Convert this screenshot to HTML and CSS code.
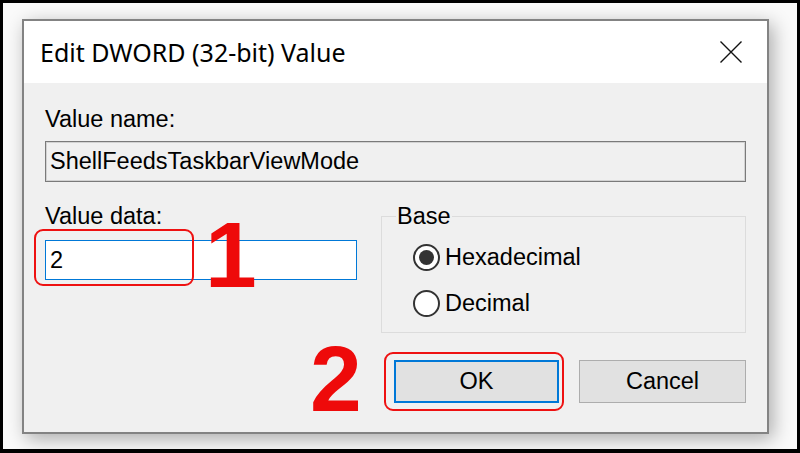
FILE: index.html
```html
<!DOCTYPE html>
<html lang="en">
  <head>
    <meta charset="UTF-8" />
    <meta name="viewport" content="width=device-width, initial-scale=1.0" />
    <title>Edit DWORD (32-bit) Value</title>
    <link rel="stylesheet" href="styles.css">
  </head>
  <body>
    <div class="screen">
      <div class="dialog">
        <div class="titlebar">
          <span class="title">Edit DWORD (32-bit) Value</span>
          <svg class="close" width="22" height="22" viewBox="0 0 22 22">
            <path d="M0.5 0.5 L21.5 21.5 M21.5 0.5 L0.5 21.5" stroke="#111" stroke-width="1.4" fill="none" />
          </svg>
        </div>
        <div class="content">
          <div class="label">Value name:</div>
          <div class="field readonly">ShellFeedsTaskbarViewMode</div>
          <div class="row">
            <div class="data-col">
              <div class="label">Value data:</div>
              <div class="field active">2</div>
            </div>
            <fieldset class="base">
              <legend>Base</legend>
              <div class="option">
                <span class="radio checked"></span>
                <span>Hexadecimal</span>
              </div>
              <div class="option">
                <span class="radio"></span>
                <span>Decimal</span>
              </div>
            </fieldset>
          </div>
          <div class="buttons">
            <button class="btn default">OK</button>
            <button class="btn cancel">Cancel</button>
          </div>
        </div>

        <!-- annotations drawn over the dialog -->
        <div class="mark mark-input"></div>
        <div class="mark mark-ok"></div>
        <div class="step step-1">1</div>
        <div class="step step-2">2</div>
      </div>
    </div>
  </body>
</html>
```

FILE: styles.css
```css
html,
body {
  margin: 0;
  padding: 0;
}
body {
  background: #000;
  width: 800px;
  height: 453px;
  overflow: hidden;
  font-family: "Liberation Sans", Arial, sans-serif;
  font-size: 23.5px;
  line-height: 27px;
  color: #000;
}
.screen {
  margin: 3px 3px 4px 3px;
  height: 446px;
  box-sizing: border-box;
  padding: 16px 0 0 19px;
  background: #fafafa;
}
.dialog {
  position: relative;
  width: 747px;
  height: 415px;
  box-sizing: border-box;
  border: 2px solid #838383;
  background: #f0f0f0;
  box-shadow: 4px 5px 18px rgba(0, 0, 0, 0.32);
  display: flex;
  flex-direction: column;
}
.titlebar {
  height: 62px;
  flex: none;
  background: #fff;
  display: flex;
  align-items: center;
  justify-content: space-between;
  padding: 0 25px 0 16px;
}
.title {
  font-family: "Noto Sans", sans-serif;
  font-size: 25px;
  line-height: 35px;
  color: #000;
}
.close {
  display: block;
}
.content {
  padding: 23px 21px 0 21px;
}
.field {
  box-sizing: border-box;
  height: 41px;
  padding: 0 4px;
  line-height: 39px;
  white-space: nowrap;
}
.readonly {
  margin-top: 8px;
  border: 1px solid #7a7a7a;
  box-shadow: inset 0 0 0 1px #d2d2d2;
  background: #f0f0f0;
}
.active {
  margin-top: 10px;
  width: 312px;
  height: 40px;
  line-height: 38px;
  border: 1px solid #0078d7;
  background: #fff;
}
.row {
  display: flex;
  align-items: flex-start;
  margin-top: 21px;
}
.data-col {
  width: 312px;
}
.base {
  margin: 0 0 0 24px;
  flex: 1;
  border: 1px solid #dcdcdc;
  padding: 14px 0 15px 14px;
  min-width: 0;
}
.base legend {
  padding: 0 1px;
}
.option {
  display: flex;
  align-items: center;
  gap: 5px;
  margin-left: 17px;
  height: 27px;
}
.option + .option {
  margin-top: 19px;
}
.radio {
  position: relative;
  width: 27px;
  height: 27px;
  box-sizing: border-box;
  border: 2px solid #333;
  border-radius: 50%;
  background: #fff;
}
.radio.checked::after {
  content: "";
  position: absolute;
  left: 4px;
  top: 4px;
  width: 15px;
  height: 15px;
  border-radius: 50%;
  background: #333;
}
.buttons {
  display: flex;
  justify-content: flex-end;
  gap: 20px;
  margin-top: 27px;
}
.btn {
  width: 165px;
  height: 43px;
  box-sizing: border-box;
  font-family: inherit;
  font-size: inherit;
  color: #000;
  background: #e1e1e1;
  border: 1px solid #adadad;
  padding: 0;
}
.btn.cancel {
  width: 167px;
}
.btn.default {
  border: 2px solid #0078d7;
}
.mark {
  position: absolute;
  border: 2.5px solid #ee1111;
  border-radius: 9px;
  box-sizing: border-box;
}
.mark-input {
  left: 10px;
  top: 208px;
  width: 160px;
  height: 57px;
}
.mark-ok {
  left: 360px;
  top: 331px;
  width: 180px;
  height: 59px;
}
.step {
  position: absolute;
  font-family: "Liberation Sans", Arial, sans-serif;
  font-weight: bold;
  font-size: 93px;
  line-height: 93px;
  color: #ee0a0a;
}
.step-1 {
  left: 181px;
  top: 188px;
}
.step-2 {
  left: 286px;
  top: 312px;
}
```
